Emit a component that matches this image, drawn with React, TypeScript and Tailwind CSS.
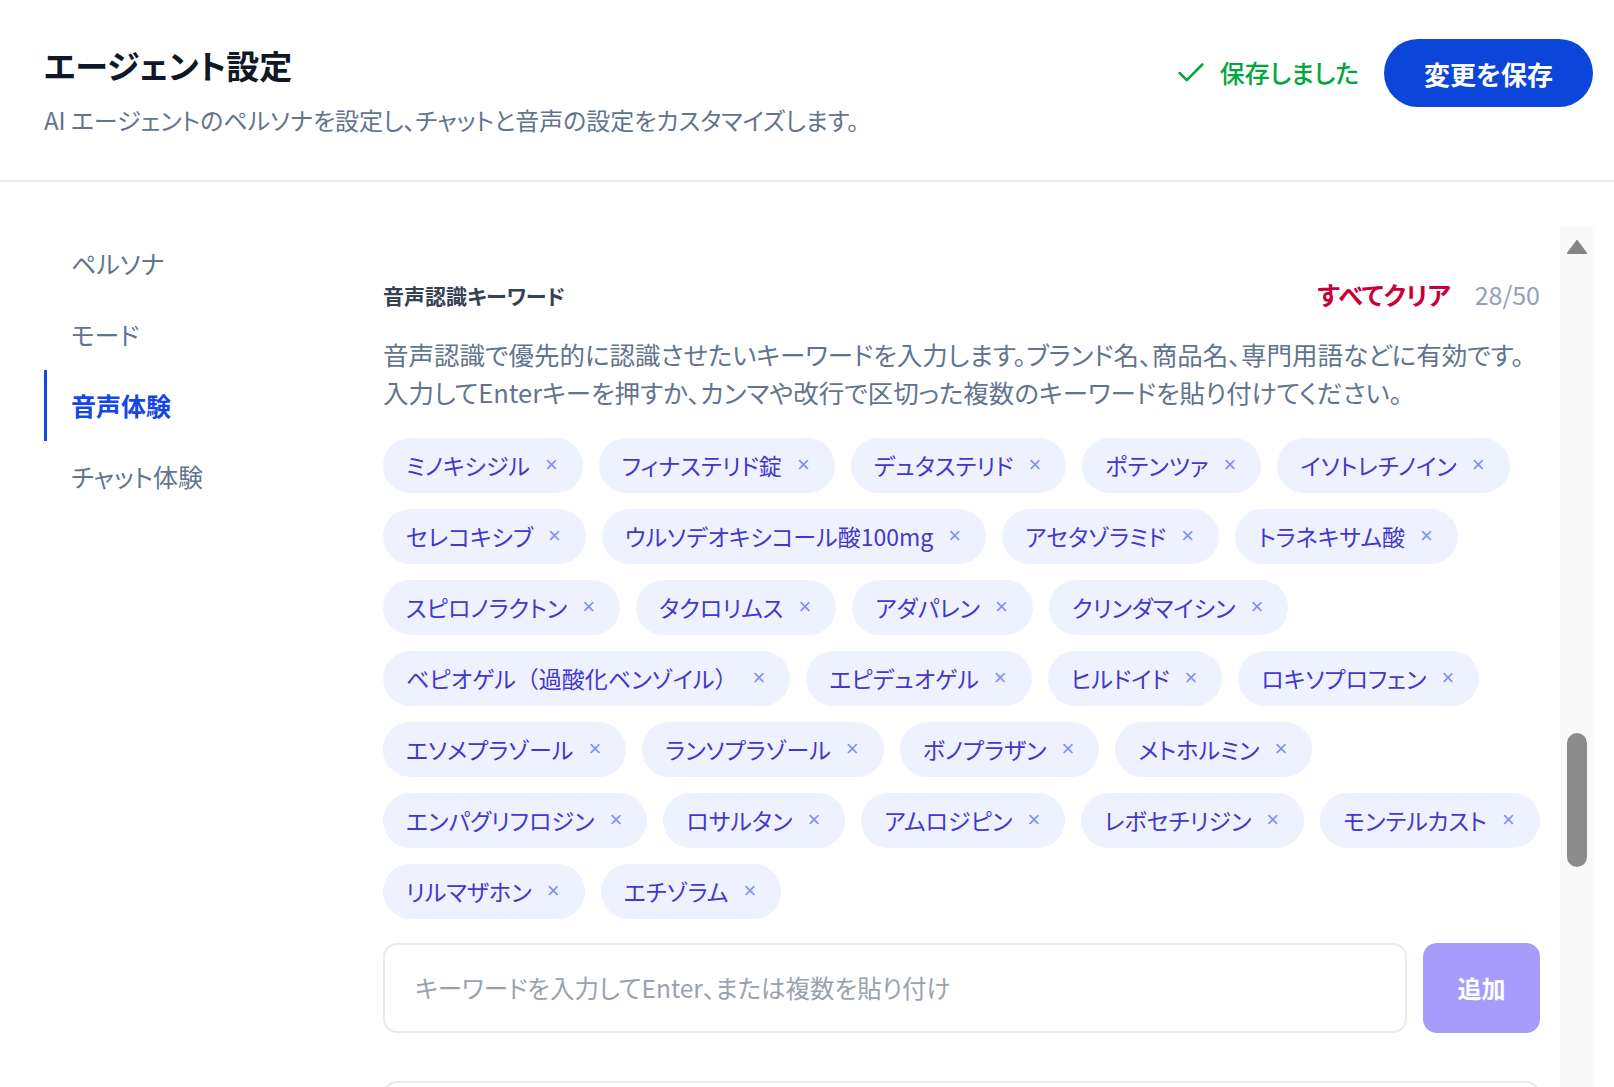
import { Check } from "lucide-react";

const keywords = [
  "ミノキシジル",
  "フィナステリド錠",
  "デュタステリド",
  "ポテンツァ",
  "イソトレチノイン",
  "セレコキシブ",
  "ウルソデオキシコール酸100mg",
  "アセタゾラミド",
  "トラネキサム酸",
  "スピロノラクトン",
  "タクロリムス",
  "アダパレン",
  "クリンダマイシン",
  "ベピオゲル（過酸化ベンゾイル）",
  "エピデュオゲル",
  "ヒルドイド",
  "ロキソプロフェン",
  "エソメプラゾール",
  "ランソプラゾール",
  "ボノプラザン",
  "メトホルミン",
  "エンパグリフロジン",
  "ロサルタン",
  "アムロジピン",
  "レボセチリジン",
  "モンテルカスト",
  "リルマザホン",
  "エチゾラム",
];

const navItems = ["ペルソナ", "モード", "音声体験", "チャット体験"];

// full-width brackets keep their full advance, like the original font
function ChipLabel({ text }: { text: string }) {
  const parts = text.split(/([（）])/);
  return (
    <>
      {parts.map((p, i) =>
        p === "（" || p === "）" ? (
          <span key={i} className="[font-feature-settings:normal]">
            {p}
          </span>
        ) : (
          <span key={i}>{p}</span>
        )
      )}
    </>
  );
}

function KeywordChip({ label }: { label: string }) {
  return (
    <span className="inline-flex h-[55px] items-center rounded-full bg-[#eef2ff] pl-[23px] pr-[25px] text-[23px] text-[#4338ca]">
      <ChipLabel text={label} />
      <button className="ml-[15px] font-['Liberation_Sans',sans-serif] text-[22px] leading-none text-[#818cf8]">×</button>
    </span>
  );
}

export default function App() {
  return (
    <div className="min-h-screen bg-white font-['Noto_Sans_CJK_JP',sans-serif] [font-feature-settings:'palt']">
      <header className="flex h-[182px] items-start justify-between border-b-2 border-[#e8ebf0] pl-[44px] pr-[21px]">
        <div className="pt-[42px]">
          <h1 className="text-[33px] font-bold leading-[46px] text-gray-900">エージェント設定</h1>
          <p className="mt-[17px] text-[24px] leading-[30px] text-slate-500">
            AI エージェントのペルソナを設定し、チャットと音声の設定をカスタマイズします。
          </p>
        </div>
        <div className="flex items-center pt-[39px]">
          <span className="flex items-center gap-[12px] text-[25px] font-medium text-green-600">
            <Check className="h-[34px] w-[34px]" strokeWidth={1.8} />
            保存しました
          </span>
          <button className="ml-[25px] h-[68px] w-[209px] rounded-full bg-[#0b45d9] text-[26px] font-bold text-white">
            変更を保存
          </button>
        </div>
      </header>

      <div className="flex pl-[44px] pr-[21px] pt-[44px]">
        <nav className="w-[339px] shrink-0 pt-[2px]">
          {navItems.map((item) => {
            const active = item === "音声体験";
            return (
              <div
                key={item}
                className={
                  active
                    ? "flex h-[71px] items-center border-l-[3px] border-blue-700 pl-[24px] text-[25px] font-bold text-blue-700"
                    : "flex h-[71px] items-center border-l-[3px] border-transparent pl-[24px] text-[25px] text-slate-500"
                }
              >
                {item}
              </div>
            );
          })}
        </nav>

        <div className="flex min-w-0 flex-1">
          <main className="min-w-0 flex-1 pr-[20px] pt-[50px]">
            <div className="flex items-center justify-between">
              <h2 className="text-[21px] font-bold leading-[30px] text-gray-700">音声認識キーワード</h2>
              <div className="flex items-center gap-[24px]">
                <button className="text-[25px] font-bold text-rose-700">すべてクリア</button>
                <span className="text-[25px] text-slate-400">28/50</span>
              </div>
            </div>
            <p className="mt-[21px] text-[25.5px] leading-[38px] text-slate-500">
              音声認識で優先的に認識させたいキーワードを入力します。ブランド名、商品名、専門用語などに有効です。
              <br />
              入力してEnterキーを押すか、カンマや改行で区切った複数のキーワードを貼り付けてください。
            </p>

            <div className="mt-[27px] flex flex-wrap gap-x-[16px] gap-y-[16px]">
              {keywords.map((k) => (
                <KeywordChip key={k} label={k} />
              ))}
            </div>

            <div className="mt-[24px] flex gap-[16px]">
              <input
                className="h-[90px] min-w-0 flex-1 rounded-[14px] border-2 border-[#e5e9f0] px-[30px] text-[24.5px] outline-none placeholder:text-gray-400"
                placeholder="キーワードを入力してEnter、または複数を貼り付け"
              />
              <button className="h-[90px] w-[117px] rounded-[14px] bg-indigo-600/50 text-[24px] font-bold text-white">
                追加
              </button>
            </div>

            <div className="mt-[48px] h-[40px] rounded-t-[14px] border-2 border-b-0 border-[#e5e9f0]" />
          </main>

          <div className="flex h-[861px] w-[33px] shrink-0 flex-col items-center bg-[#f9f9f9]">
            <svg className="mt-[14px]" width="20" height="14" viewBox="0 0 20 14">
              <path d="M10 1 L19 13 L1 13 Z" fill="#858585" stroke="#858585" strokeWidth="2" strokeLinejoin="round" />
            </svg>
            <div className="mt-[479px] h-[134px] w-[20px] rounded-full bg-[#8c8c8c]" />
          </div>
        </div>
      </div>
    </div>
  );
}
